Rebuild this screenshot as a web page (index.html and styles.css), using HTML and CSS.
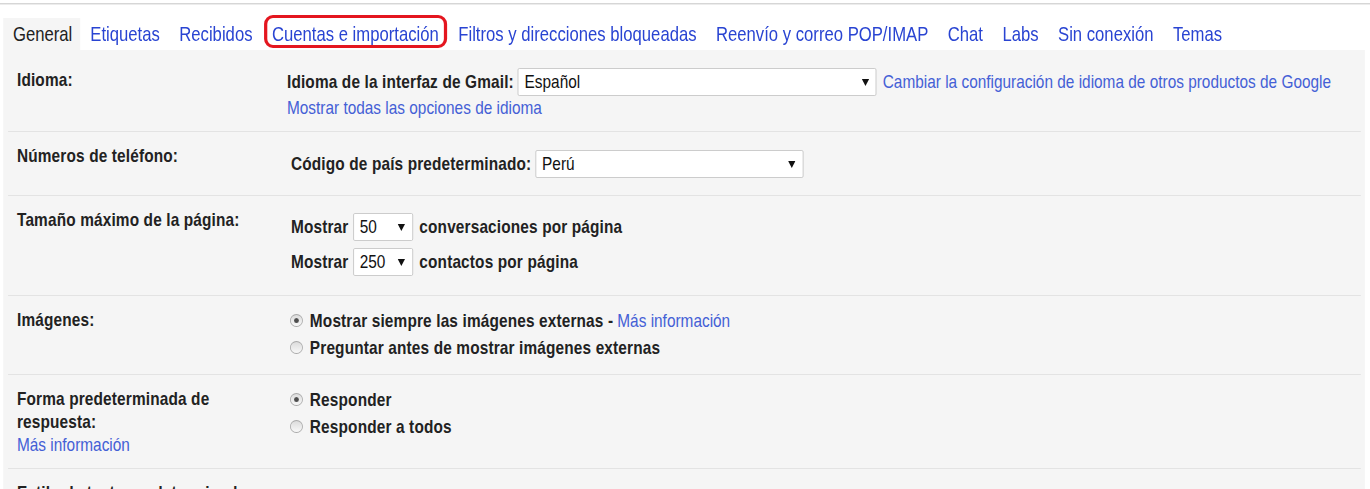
FILE: index.html
```html
<!DOCTYPE html>
<html lang="es">
<head>
<meta charset="utf-8">
<title>Configuración - General</title>
<link rel="stylesheet" href="styles.css">
</head>
<body>
<div class="topline"></div>
<div class="page">
<nav class="tabs">
  <span class="tab active">General</span>
  <span class="tab">Etiquetas</span>
  <span class="tab">Recibidos</span>
  <span class="tab marked">Cuentas e importación</span>
  <span class="tab">Filtros y direcciones bloqueadas</span>
  <span class="tab">Reenvío y correo POP/IMAP</span>
  <span class="tab">Chat</span>
  <span class="tab">Labs</span>
  <span class="tab">Sin conexión</span>
  <span class="tab">Temas</span>
</nav>
<main class="panel">
  <section class="row row-lang">
    <div class="label">Idioma:</div>
    <div class="value">
      <div class="line sel-line">
        <span class="b">Idioma de la interfaz de Gmail:</span>
        <span class="select sel-lang"><span>Español</span><svg class="arrow" width="9" height="9" viewBox="0 0 9 9"><polygon points="0,1 9,1 4.5,8"/></svg></span>
        <a class="link gap-link">Cambiar la configuración de idioma de otros productos de Google</a>
      </div>
      <div class="line link-line"><a class="link">Mostrar todas las opciones de idioma</a></div>
    </div>
  </section>

  <section class="row row-phone">
    <div class="label">Números de teléfono:</div>
    <div class="value indent">
      <div class="line sel-line">
        <span class="b">Código de país predeterminado:</span>
        <span class="select sel-country"><span>Perú</span><svg class="arrow" width="9" height="9" viewBox="0 0 9 9"><polygon points="0,1 9,1 4.5,8"/></svg></span>
      </div>
    </div>
  </section>

  <section class="row row-size">
    <div class="label">Tamaño máximo de la página:</div>
    <div class="value indent sizes">
      <div class="line sel-line">
        <span class="b">Mostrar</span>
        <span class="select sel-small"><span>50</span><svg class="arrow" width="9" height="9" viewBox="0 0 9 9"><polygon points="0,1 9,1 4.5,8"/></svg></span>
        <span class="b">conversaciones por página</span>
      </div>
      <div class="line sel-line">
        <span class="b">Mostrar</span>
        <span class="select sel-small"><span>250</span><svg class="arrow" width="9" height="9" viewBox="0 0 9 9"><polygon points="0,1 9,1 4.5,8"/></svg></span>
        <span class="b">contactos por página</span>
      </div>
    </div>
  </section>

  <section class="row row-img">
    <div class="label">Imágenes:</div>
    <div class="value">
      <div class="line radio-line"><span class="radio checked"></span><span class="b">Mostrar siempre las imágenes externas - </span><a class="link sp">Más información</a></div>
      <div class="line radio-line"><span class="radio"></span><span class="b">Preguntar antes de mostrar imágenes externas</span></div>
    </div>
  </section>

  <section class="row row-reply">
    <div class="label">Forma predeterminada de<br>respuesta:<br><a class="link">Más información</a></div>
    <div class="value">
      <div class="line radio-line"><span class="radio checked"></span><span class="b">Responder</span></div>
      <div class="line radio-line"><span class="radio"></span><span class="b">Responder a todos</span></div>
    </div>
  </section>

  <section class="row row-style">
    <div class="label">Estilo de texto predeterminado:</div>
    <div class="value"></div>
  </section>
</main>
</div>
</body>
</html>
```
FILE: styles.css
```css
html, body {
  margin: 0;
  padding: 0;
  background: #ffffff;
}
body {
  font-family: "Liberation Sans", Arial, sans-serif;
  font-size: 19px;
  color: #222222;
  padding-top: 3px;
  height: 486px;
  overflow: hidden;
}
.topline {
  height: 1px;
  background: #d6d6d6;
  border-bottom: 1px solid #ececec;
}
/* the reference is a horizontally condensed capture: lay out at full width, then condense */
.page {
  width: 1691px;
  transform: scaleX(0.81);
  transform-origin: 0 0;
}
.tabs {
  display: flex;
  margin: 13px 0 0 3.7px;
  height: 32px;
  font-size: 20.6px;
  line-height: 32px;
}
.tab {
  position: relative;
  padding: 0 11.7px 0 12.3px;
  color: #2944d2;
  white-space: nowrap;
}
.tab.active {
  color: #222222;
  background: #f5f5f5;
  padding-right: 9.9px;
}
.tab.marked::after {
  content: "";
  position: absolute;
  left: 2.4px;
  right: 1.8px;
  top: -3px;
  bottom: 2px;
  border-style: solid;
  border-color: #e4161f;
  border-width: 3.5px 4.3px;
  border-radius: 11px / 9px;
}
.panel {
  width: 1681.5px;
  margin: 0 0 0 3.7px;
  background: #f5f5f5;
  padding-bottom: 40px;
}
.row {
  display: grid;
  grid-template-columns: 344.4px 1fr;
  align-items: start;
  margin: 0 4.9px 0 6.2px;
  padding: 11px 0 12px;
  border-bottom: 1px solid #e3e3e3;
}
.label {
  padding: 1px 0 0 11.1px;
  line-height: 23px;
  font-weight: bold;
  letter-spacing: 0.18px;
}
.b {
  font-weight: bold;
  letter-spacing: 0.18px;
}
.value {
  display: flex;
  flex-direction: column;
}
.indent {
  padding-left: 4.9px;
}
.line {
  display: flex;
  align-items: center;
  white-space: nowrap;
}
.sel-line {
  height: 28px;
}
.link-line {
  height: 24px;
}
.radio-line {
  height: 27px;
}
.link {
  color: #4460d6;
  font-weight: normal;
  letter-spacing: 0;
  cursor: pointer;
}
.sp {
  margin-left: 5px;
}
.gap-link {
  margin-left: 7.4px;
}
.select {
  display: inline-flex;
  align-items: center;
  justify-content: space-between;
  box-sizing: border-box;
  height: 28px;
  margin: 0 8px 0 5.5px;
  padding: 0 8.6px 0 7.4px;
  background: #ffffff;
  border-style: solid;
  border-color: #c6c6c6;
  border-width: 1px 1.2px;
  border-radius: 2px;
  color: #111111;
}
.sel-lang { width: 443.2px; margin-left: 4.9px; margin-right: 0; }
.sel-country { width: 330.9px; margin-left: 4.9px; }
.sel-small { width: 74.1px; }
.arrow polygon { fill: #111111; }

.row-lang { padding-top: 18px; padding-bottom: 11px; }
.row-lang .label { padding-top: 0; line-height: 24px; }
.row-phone .value { padding-top: 7px; }
.row-phone { padding-bottom: 17px; }
.row-size .value { padding-top: 6px; }
.sizes { gap: 7px; }
.row-size { padding-bottom: 19px; }
.row-img { padding-bottom: 13px; }
.row-reply { padding-bottom: 12px; }
.row-style { border-bottom: none; }

.radio {
  box-sizing: border-box;
  width: 16px;
  height: 13px;
  margin: 0 8.6px 0 3.7px;
  border-radius: 50%;
  border-style: solid;
  border-color: #a9a9a9;
  border-width: 1px 1.2px;
  background: linear-gradient(#dcdcdc, #f8f8f8);
  position: relative;
  flex: none;
}
.radio.checked::after {
  content: "";
  position: absolute;
  left: 3.8px;
  top: 3px;
  width: 6px;
  height: 5px;
  border-radius: 50%;
  background: #4d4d4d;
}
```
